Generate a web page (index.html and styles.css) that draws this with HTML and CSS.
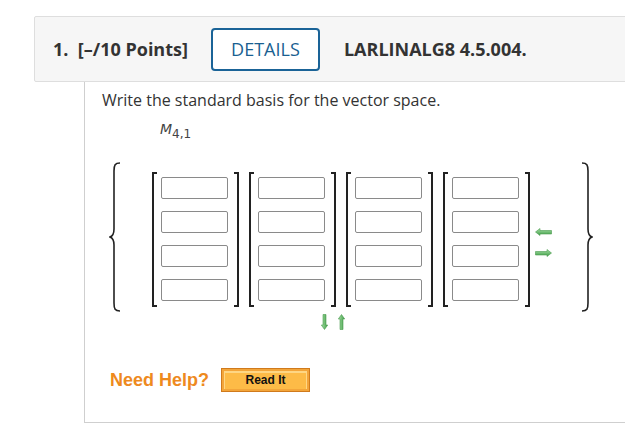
FILE: index.html
```html
<!DOCTYPE html>
<html>
<head>
<meta charset="utf-8">
<link rel="stylesheet" href="styles.css">
</head>
<body>
<div class="question">
  <div class="q-header">
    <span class="q-num">1.&nbsp; [–/10 Points]</span>
    <button class="details">DETAILS</button>
    <span class="q-id">LARLINALG8 4.5.004.</span>
  </div>
  <div class="q-body">
    <p class="prompt">Write the standard basis for the vector space.</p>
    <p class="space"><i>M</i><sub>4,1</sub></p>
    <div class="set-row">
      <svg class="brace" width="12" height="150" viewBox="0 0 12 150">
        <path d="M11,1 C6,1 5,3 5,9 L5,67 C5,72 4,74 1,75 C4,76 5,78 5,83 L5,141 C5,147 6,149 11,149" fill="none" stroke="#222" stroke-width="1.6"/>
      </svg>
      <div class="matrices">
        <div class="matrix"><div class="bl"></div><div class="col"><input><input><input><input></div><div class="br"></div></div>
        <div class="matrix"><div class="bl"></div><div class="col"><input><input><input><input></div><div class="br"></div></div>
        <div class="matrix"><div class="bl"></div><div class="col"><input><input><input><input></div><div class="br"></div></div>
        <div class="matrix"><div class="bl"></div><div class="col"><input><input><input><input></div><div class="br"></div></div>
      </div>
      <div class="hcontrols">
        <svg width="17" height="8" viewBox="0 0 17 8"><defs><linearGradient id="g1" x1="0" y1="0" x2="0" y2="1"><stop offset="0" stop-color="#a6e0a6"/><stop offset="1" stop-color="#3f9c46"/></linearGradient></defs><path d="M0.5,4 L5,0.5 L5,2.5 L16.5,2.5 L16.5,6 L5,6 L5,7.5 Z" fill="url(#g1)" stroke="#4a9a4f" stroke-width="0.6"/></svg>
        <svg width="17" height="8" viewBox="0 0 17 8"><path d="M16.5,4 L12,0.5 L12,2.5 L0.5,2.5 L0.5,6 L12,6 L12,7.5 Z" fill="url(#g1)" stroke="#4a9a4f" stroke-width="0.6"/></svg>
      </div>
      <svg class="brace" width="12" height="150" viewBox="0 0 12 150">
        <path d="M1,1 C6,1 7,3 7,9 L7,67 C7,72 8,74 11,75 C8,76 7,78 7,83 L7,141 C7,147 6,149 1,149" fill="none" stroke="#222" stroke-width="1.6"/>
      </svg>
    </div>
    <div class="vcontrols">
      <svg width="7" height="16" viewBox="0 0 7 16"><defs><linearGradient id="g2" x1="0" y1="0" x2="1" y2="0"><stop offset="0" stop-color="#a6e0a6"/><stop offset="1" stop-color="#3f9c46"/></linearGradient></defs><path d="M3.5,15.5 L0.3,11 L2,11 L2,0.5 L5,0.5 L5,11 L6.7,11 Z" fill="url(#g2)" stroke="#4a9a4f" stroke-width="0.6"/></svg>
      <svg width="7" height="16" viewBox="0 0 7 16"><path d="M3.5,0.5 L0.3,5 L2,5 L2,15.5 L5,15.5 L5,5 L6.7,5 Z" fill="url(#g2)" stroke="#4a9a4f" stroke-width="0.6"/></svg>
    </div>
    <div class="help">
      <span class="need">Need Help?</span>
      <button class="readit">Read It</button>
    </div>
  </div>
</div>
</body>
</html>
```
FILE: styles.css
```css
html, body {
  margin: 0;
  padding: 0;
  background: #fff;
  overflow: hidden;
}
body {
  font-family: "Open Sans", "DejaVu Sans", sans-serif;
  color: #333;
}
.question {
  margin: 16px 0 0 34px;
  width: 700px;
}
.q-header {
  box-sizing: border-box;
  height: 66px;
  display: flex;
  align-items: center;
  padding-left: 18px;
  background: #f6f6f6;
  border: 1px solid #dedede;
  border-radius: 2px;
  font-size: 18px;
  font-weight: 700;
}
.q-num {
  color: #333;
}
.details {
  box-sizing: border-box;
  width: 109px;
  height: 43px;
  margin: 0 24px 0 23px;
  border: 2px solid #1a6397;
  border-radius: 4px;
  background: #fff;
  color: #1a5f91;
  font-family: "Open Sans", sans-serif;
  font-size: 18px;
  font-weight: 500;
  padding: 0;
}
.q-id {
  color: #333;
}
.q-body {
  margin-left: 50px;
  border-left: 1px solid #cfcfcf;
  border-bottom: 1px solid #cfcfcf;
  padding: 8px 0 30px 17px;
}
.prompt {
  margin: 0;
  font-size: 16px;
  line-height: 20px;
}
.space {
  margin: 10px 0 0 58px;
  font-size: 14px;
  line-height: 18px;
  font-family: "DejaVu Sans", sans-serif;
  color: #444;
}
.space sub {
  font-size: 12px;
  vertical-align: -4px;
}
.set-row {
  display: flex;
  align-items: flex-start;
  margin-top: 19px;
  padding-left: 7px;
}
.matrices {
  display: flex;
  gap: 10px;
  margin: 10px 0 0 31px;
}
.matrix {
  display: flex;
}
.bl, .br {
  box-sizing: border-box;
  width: 5px;
  border-top: 2px solid #222;
  border-bottom: 2px solid #222;
}
.bl { border-left: 2px solid #222; }
.br { border-right: 2px solid #222; }
.col {
  display: flex;
  flex-direction: column;
  gap: 12px;
  padding: 5px 6px 6px 4px;
}
.col input {
  box-sizing: border-box;
  width: 67px;
  height: 22px;
  border: 1px solid #8a8a8a;
  border-radius: 2px;
  margin: 0;
  padding: 0;
  background: #fff;
}
.hcontrols {
  display: flex;
  flex-direction: column;
  gap: 13px;
  margin: 66px 29px 0 5px;
}
.hcontrols svg, .vcontrols svg {
  display: block;
}
.vcontrols {
  display: flex;
  gap: 10px;
  padding-left: 219px;
  margin-top: 2px;
}
.help {
  display: flex;
  align-items: center;
  margin-top: 38px;
  padding-left: 8px;
}
.need {
  font-family: "Liberation Sans", Arial, sans-serif;
  font-weight: 700;
  font-size: 18px;
  color: #ee8a1e;
  margin-right: 12px;
}
.readit {
  box-sizing: border-box;
  width: 89px;
  height: 24px;
  border: 1px solid #d07a1c;
  background: #fdbb47;
  box-shadow: inset 0 0 0 2px #f3a53a, inset 0 1px 0 3px #fed684;
  font-family: "Liberation Sans", Arial, sans-serif;
  font-weight: 700;
  font-size: 12px;
  color: #111;
  padding: 0;
}
```
